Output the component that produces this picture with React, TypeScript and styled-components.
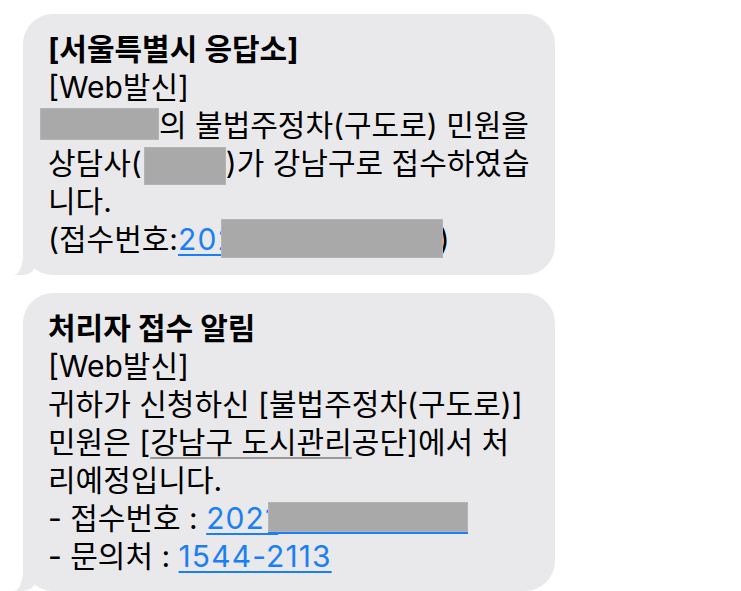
import styled, { createGlobalStyle } from "styled-components";

const GlobalStyle = createGlobalStyle`
  html, body {
    margin: 0;
    padding: 0;
    background: #ffffff;
  }
`;

const BUBBLE = "#e9e9eb";
const LINK = "#1a7ff5";

function App() {
  return (
    <>
      <GlobalStyle />
      <Thread>
        <Bubble>
          <Title>[서울특별시 응답소]</Title>
          <Line>[Web발신]</Line>
          <Line>
            <Redact $w={119} $h={32} $top={2} $ml={-8} />의 불법주정차(구도로) 민원을
          </Line>
          <Line>
            상담사(<Redact $w={82} $h={38} $top={3} $ml={2} />)가 강남구로 접수하였습
          </Line>
          <Line>니다.</Line>
          <Line>
            (접수번호:<Link>202</Link>
            <Redact $w={222} $h={39} $top={-1} $ml={-16} />
            <Tail>)</Tail>
          </Line>
        </Bubble>

        <Bubble>
          <Title>처리자 접수 알림</Title>
          <Line>[Web발신]</Line>
          <Line>귀하가 신청하신 [불법주정차(구도로)]</Line>
          <Line>
            민원은 [<Detected>강남구 도시관리</Detected>공단]에서 처
          </Line>
          <Line>리예정입니다.</Line>
          <Line>
            - 접수번호 : <Link>2021</Link>
            <Redact $w={200} $h={32} $top={3} $ml={-10} $underline />
          </Line>
          <Line>
            - 문의처 : <Link>1544-2113</Link>
          </Line>
        </Bubble>
      </Thread>
    </>
  );
}

const Thread = styled.div`
  display: flex;
  flex-direction: column;
  gap: 18px;
  padding: 14px 0 0 23px;
`;

const Bubble = styled.div`
  position: relative;
  box-sizing: border-box;
  width: 532px;
  padding: 16px 20px 16px 25px;
  background: ${BUBBLE};
  border-radius: 30px;
  font-family: Inter, "Noto Sans CJK KR", sans-serif;
  font-size: 30px;
  line-height: 38px;
  color: #000000;

  /* message tail, bottom left */
  &::before {
    content: "";
    position: absolute;
    left: -10px;
    bottom: 0;
    width: 22px;
    height: 34px;
    background: ${BUBBLE};
    border-bottom-right-radius: 12px 10px;
  }

  &::after {
    content: "";
    position: absolute;
    left: -30px;
    bottom: 0;
    width: 30px;
    height: 34px;
    background: #ffffff;
    border-bottom-right-radius: 10px 20px;
  }
`;

const Line = styled.div`
  position: relative;
  z-index: 1;
  white-space: nowrap;
`;

const Title = styled(Line)`
  font-weight: 700;
`;

const Link = styled.span`
  color: ${LINK};
  letter-spacing: 1.1px;
  text-decoration: underline;
  text-decoration-thickness: 2px;
  text-underline-offset: 4px;
`;

const Detected = styled.span`
  text-decoration: underline;
  text-decoration-color: #9a9a9a;
  text-decoration-thickness: 2px;
  text-underline-offset: 4px;
`;

const Redact = styled.span<{ $w: number; $h: number; $top: number; $ml: number; $underline?: boolean }>`
  display: inline-block;
  position: relative;
  top: ${(p) => p.$top}px;
  vertical-align: top;
  width: ${(p) => p.$w}px;
  height: ${(p) => p.$h}px;
  margin-left: ${(p) => p.$ml}px;
  background: #a9a9a9;
  box-shadow: inset 0 0 0 1px #b4b4b4;
  ${(p) => (p.$underline ? `border-bottom: 2px solid ${LINK}; box-sizing: border-box;` : "")}
`;

const Tail = styled.span`
  margin-left: -4px;
`;

export default App;
